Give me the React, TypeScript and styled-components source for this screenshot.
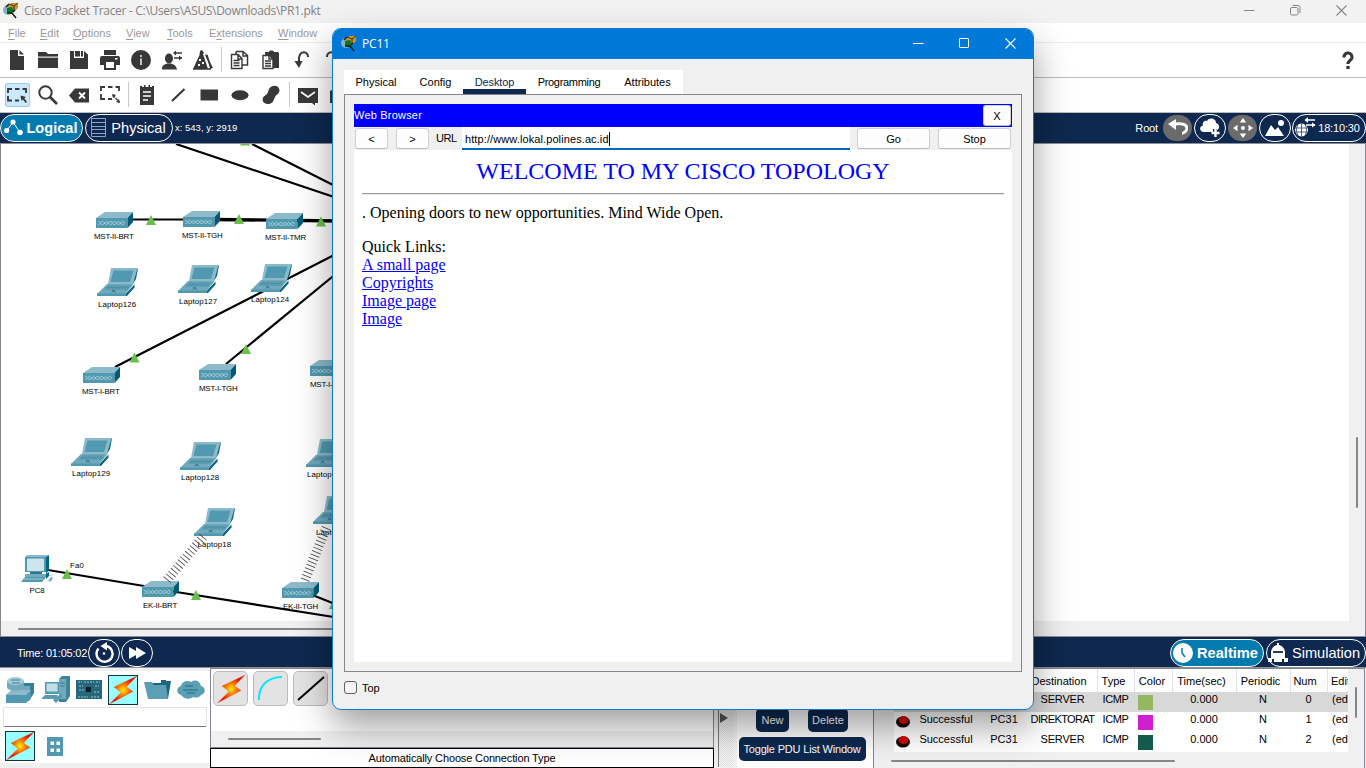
import React from "react";
import styled, { createGlobalStyle, css } from "styled-components";

const NAVY = "#0e284f";
const INK = "#383838";
const ui = '"Liberation Sans", Arial, sans-serif';
const segoe = '"Open Sans", "Noto Sans", sans-serif';

const Global = createGlobalStyle`
  * { box-sizing: border-box; }
  html, body { margin: 0; padding: 0; }
  body { width: 1366px; height: 768px; overflow: hidden; font-family: ${ui}; font-size: 11px; color: #000; background: #f0f0f0; }
  svg { display: block; flex: none; overflow: visible; }
`;

const Screen = styled.div`
  position: relative;
  display: flex;
  flex-direction: column;
  width: 1366px;
  height: 768px;
  overflow: hidden;
  background: #f0f0f0;
`;

const Txt = styled.span<{ $ls?: number }>`
  white-space: nowrap;
  letter-spacing: ${(p) => p.$ls ?? 0}px;
`;

/* ---------- main window chrome ---------- */
const TitleBar = styled.header`
  display: flex;
  align-items: center;
  height: 23px;
  padding: 0 0 2px 3px;
  background: #f2f2f2;
  color: #838383;
  font: 12px ${segoe};
`;
const TitleText = styled(Txt)`
  margin-left: 5px;
  flex: 1;
`;
const CaptionButtons = styled.div<{ $pad: number }>`
  display: flex;
  align-items: center;
  gap: 35px;
  margin-left: auto;
  padding-right: ${(p) => p.$pad}px;
`;
const MenuBar = styled.nav`
  display: flex;
  align-items: center;
  height: 20px;
  background: #fff;
  border-bottom: 1px solid #ededed;
  color: #999;
  font-size: 11px;
  padding: 2px 0 0 8px;
`;
const MenuItem = styled.span<{ $w: number }>`
  width: ${(p) => p.$w}px;
  white-space: nowrap;
  u { text-underline-offset: 2px; }
`;
const ToolBar = styled.div`
  display: flex;
  align-items: center;
  height: 35px;
  padding-left: 1.5px;
  background: #fff;
  border-bottom: 1px solid #bcbcbc;
  color: ${INK};
`;
const Tool = styled.div<{ $on?: boolean }>`
  display: flex;
  align-items: center;
  justify-content: center;
  width: 25px;
  height: 24px;
  margin: 0 3px;
  border-radius: 3px;
  svg { margin-left: -1px; }
  ${(p) => p.$on && css`background: #cce8ff; box-shadow: 0 0 0 1px #99cdf5 inset;`}
`;
const ToolSep = styled.div`
  width: 1px;
  height: 25px;
  margin: 0 2.5px;
  background: #c8c8c8;
`;
const Help = styled.div`
  margin-left: auto;
  width: 36px;
  display: flex;
  justify-content: center;
`;

const NavyBar = styled.div<{ $drop?: number }>`
  display: flex;
  align-items: center;
  height: 31px;
  padding-top: ${(p) => p.$drop ?? 0}px;
  background: ${NAVY};
  color: #fff;
  border-bottom: 1px solid #8c8f97;
`;
const Pill = styled.div<{ $w: number; $on?: boolean; $gray?: boolean; $gap?: number; $mr?: number; $pr?: number }>`
  display: flex;
  align-items: center;
  flex: none;
  justify-content: center;
  width: ${(p) => p.$w}px;
  height: 28px;
  margin-right: ${(p) => p.$mr ?? 1}px;
  padding-right: ${(p) => p.$pr ?? 0}px;
  border: 1px solid ${(p) => (p.$gray ? "transparent" : "#fff")};
  border-radius: 14px;
  background: ${(p) => (p.$on ? "#037bae" : p.$gray ? "#6b6b6b" : "transparent")};
  background-clip: padding-box;
  font-size: 14.6px;
  font-weight: ${(p) => (p.$on ? 700 : 400)};
  gap: ${(p) => p.$gap ?? 4}px;
`;
const Coords = styled(Txt)`
  margin-left: 1px;
  font-size: 9.5px;
`;
const Clock = styled(Txt)`
  font-size: 11px;
`;
const RootLabel = styled(Txt)`
  margin-right: 4px;
`;
const NavRight = styled.div`
  display: flex;
  align-items: center;
  margin-left: auto;
`;

/* ---------- workspace ---------- */
const Workspace = styled.main`
  display: grid;
  grid-template-columns: 1348px 1fr;
  grid-template-rows: 477px 1fr;
  height: 494px;
  border-left: 1px solid #83868f;
  border-right: 1px solid #83868f;
  border-bottom: 1px solid #8c8f97;
  background: #f0f0f0;
`;
const Canvas = styled.div`
  position: relative;
  overflow: hidden;
  background: #fff;
`;
const Links = styled.svg`
  position: absolute;
  inset: 0;
`;
const Node = styled.div<{ $x: number; $y: number }>`
  position: absolute;
  left: ${(p) => p.$x - 1}px;
  top: ${(p) => p.$y - 144}px;
`;
const NodeLabel = styled.span<{ $x: number; $y: number; $ls: number }>`
  position: absolute;
  left: ${(p) => p.$x - 1}px;
  top: ${(p) => p.$y - 148}px;
  font-size: 7.9px;
  line-height: 10px;
  letter-spacing: ${(p) => p.$ls}px;
  white-space: nowrap;
`;
const VTrack = styled.div`
  display: flex;
  justify-content: center;
  padding-top: 293px;
`;
const HTrack = styled.div`
  display: flex;
  align-items: center;
  padding: 1px 0 0 17px;
`;
const Thumb = styled.div<{ $w: number; $h: number }>`
  flex: none;
  width: ${(p) => p.$w}px;
  height: ${(p) => p.$h}px;
  background: #868686;
  border-radius: 1px;
`;

const TimeLabel = styled(Txt)`
  margin-left: 17px;
  width: 71px;
  font-size: 11px;
`;

/* ---------- bottom panels ---------- */
const Bottom = styled.section`
  display: flex;
  height: 100px;
`;
const DevicePanel = styled.div`
  width: 210px;
  height: 92px;
  margin-top: 3px;
  padding-top: 3px;
  background: #fff;
`;
const DeviceRow = styled.div`
  display: grid;
  grid-template-columns: 39px 34px 32px 36px 32px 36px;
  justify-items: center;
  align-items: center;
  height: 31px;
`;
const SearchBox = styled.div`
  width: 204px;
  height: 20px;
  margin: 2px 0 3px 3px;
  border: 1px solid #e2e2e2;
  border-bottom: 1px solid #777;
  border-radius: 2px;
`;
const SubRow = styled.div`
  display: flex;
  align-items: center;
  gap: 12px;
  padding: 1px 0 0 5px;
`;
const Selected = styled.div`
  width: 30px;
  height: 30px;
  border: 1px solid #12323c;
  background: #99ffff;
`;
const CablePanel = styled.div`
  display: flex;
  flex-direction: column;
  width: 504px;
`;
const CableTop = styled.div`
  display: flex;
  flex-direction: column;
  height: 80px;
  border: 1px solid #83868f;
  background: #fff;
`;
const CableRow = styled.div`
  display: flex;
  gap: 5px;
  height: 62px;
  padding: 2px 0 0 2px;
`;
const CableTile = styled.div`
  display: flex;
  align-items: center;
  justify-content: center;
  width: 35px;
  height: 35px;
  border: 1px solid #bbb;
  border-radius: 5px;
  background: #e3e3e3;
`;
const CableScroll = styled(HTrack)`
  flex: 1;
  padding-top: 0;
  background: #f0f0f0;
`;
const CableName = styled.div`
  display: flex;
  align-items: center;
  justify-content: center;
  height: 20px;
  border: 1px solid #000;
  background: #fff;
`;
const Splitter = styled.div`
  display: flex;
  align-items: center;
  width: 15px;
  height: 99px;
  margin: 0 4px;
  border-left: 1px solid #777;
  background: repeating-conic-gradient(#e2e2e2 0 25%, #f4f4f4 0 50%) 0 0 / 2px 2px;
`;
const PduPanel = styled.div`
  display: flex;
  flex-direction: column;
  align-items: center;
  width: 137px;
  padding: 40px 6px 0 0;
  border-right: 1px solid #83868f;
  background: #fdfdfd;
`;
const PduRow = styled.div`
  display: flex;
  gap: 19px;
  margin-bottom: 5px;
`;
const NavyButton = styled.div<{ $w: number }>`
  display: flex;
  align-items: center;
  justify-content: center;
  width: ${(p) => p.$w}px;
  height: 24px;
  border-radius: 5px;
  background: ${NAVY};
  color: #fff;
`;
const PduList = styled.div`
  display: grid;
  grid-template-columns: 474px 1fr;
  grid-template-rows: 83px 1fr;
  flex: 1;
  border-right: 1px solid #83868f;
  border-top: 1px solid #83868f;
  margin-right: 1px;
`;
const Table = styled.div`
  overflow: hidden;
  background: #fff;
`;
const Row = styled.div<{ $head?: boolean; $on?: boolean }>`
  display: grid;
  grid-template-columns: 19px 19px 68px 48px 69px 37px 38px 64px 54px 37px 21px;
  grid-template-rows: ${(p) => (p.$head ? 23 : 14)}px;
  align-items: center;
  height: ${(p) => (p.$head ? 23 : 20)}px;
  background: linear-gradient(to right, #f0f0f0 20px, ${(p) => (p.$on ? "#d8d8d8" : "#fff")} 20px);
`;
const Cell = styled.span<{ $head?: boolean; $clip?: boolean; $pr?: number }>`
  display: flex;
  align-items: center;
  justify-content: ${(p) => (p.$clip ? "flex-start" : "center")};
  height: 100%;
  padding-left: ${(p) => (p.$clip ? (p.$head ? 3 : 5) : 0)}px;
  padding-right: ${(p) => p.$pr ?? 0}px;
  overflow: hidden;
  white-space: nowrap;
  ${(p) => p.$head && css`border-left: 1px solid #e3e3e3;`}
`;
const Swatch = styled.i<{ $c: string }>`
  align-self: start;
  width: 15px;
  height: 15px;
  margin: 3px 0 0 4px;
  background: ${(p) => p.$c};
`;
const Ball = styled.svg`
  align-self: start;
  margin: 2px 0 0 2px;
`;
const ListV = styled.div`
  display: flex;
  justify-content: center;
  padding: 18px 0 0 0;
`;

/* ---------- PC11 window ---------- */
const Dialog = styled.section`
  position: absolute;
  left: 332px;
  top: 28px;
  display: flex;
  flex-direction: column;
  width: 702px;
  height: 682px;
  border: 1px solid #0f78d0;
  border-radius: 9px;
  background: #f0f0f0;
  overflow: hidden;
`;
const DialogShadow = styled.div`
  position: absolute;
  left: 332px;
  top: 28px;
  width: 702px;
  height: 682px;
  border-radius: 9px;
  box-shadow: 0 16px 36px rgba(0, 0, 0, 0.38);
`;
const DialogTitle = styled.div`
  display: flex;
  align-items: center;
  height: 30px;
  padding: 0 0 2px 8px;
  background: #0078d7;
  color: #fff;
  font: 12px ${segoe};
`;
const Tabs = styled.div`
  display: flex;
  width: 339px;
  height: 24px;
  margin: 11px 0 0 11px;
  background: #fff;
`;
const Tab = styled.div<{ $w: number; $on?: boolean; $ls?: number }>`
  display: flex;
  align-items: center;
  justify-content: center;
  width: ${(p) => p.$w}px;
  border-bottom: 5px solid ${(p) => (p.$on ? NAVY : "transparent")};
  padding-top: 5px;
  letter-spacing: ${(p) => p.$ls ?? 0}px;
  color: ${(p) => (p.$on ? NAVY : "#000")};
`;
const TabPanel = styled.div`
  display: flex;
  flex-direction: column;
  width: 678px;
  height: 578px;
  margin-left: 11px;
  padding: 9px;
  border: 1px solid #83868f;
`;
const BrowserHead = styled.div`
  display: flex;
  align-items: center;
  justify-content: space-between;
  height: 23px;
  padding-right: 1px;
  background: #0000fe;
  color: #fff;
`;
const BrowserName = styled(Txt)`
  padding-bottom: 2px;
`;
const Button = styled.div<{ $w: number; $mr?: number }>`
  display: flex;
  flex: none;
  align-items: center;
  justify-content: center;
  width: ${(p) => p.$w}px;
  height: 21px;
  margin-right: ${(p) => p.$mr ?? 0}px;
  border: 1px solid #d0d0d0;
  border-bottom-color: #bbb;
  border-radius: 3px;
  background: #fdfdfd;
  color: #000;
`;
const UrlRow = styled.div`
  display: flex;
  align-items: center;
  height: 23px;
  padding-left: 1px;
`;
const UrlLabel = styled(Txt)`
  flex: none;
  width: 26px;
  padding-bottom: 1px;
`;
const UrlInput = styled.div`
  display: flex;
  flex: none;
  align-items: center;
  width: 388px;
  height: 23px;
  margin-right: 7px;
  padding: 3px 0 0 3px;
  border-bottom: 2px solid #0067c0;
  background: #fff;
`;
const Caret = styled.i`
  width: 1px;
  height: 14px;
  background: #000;
`;
const WebPage = styled.article`
  flex: 1;
  padding: 8px 8px 0;
  background: #fff;
  font: 16px/18px "Liberation Serif", "Times New Roman", serif;
`;
const PageTitle = styled.div`
  color: #0000ff;
  font-size: 24px;
  line-height: 27px;
  text-align: center;
`;
const Rule = styled.div`
  height: 2px;
  margin: 8px 0 9px;
  border-top: 1px solid #9a9a9a;
  border-bottom: 1px solid #e6e6e6;
`;
const PageLine = styled.div<{ $gap?: number }>`
  height: 18px;
  margin-bottom: ${(p) => p.$gap ?? 0}px;
`;
const PageLink = styled(PageLine)`
  color: #0000ee;
  text-decoration: underline;
`;
const TopRow = styled.label`
  display: flex;
  align-items: center;
  gap: 5px;
  margin: 9px 0 0 11px;
`;
const Check = styled.i`
  width: 13px;
  height: 13px;
  border: 1px solid #5f5f5f;
  border-radius: 3px;
  background: #f6f6f6;
`;

/* ---------- drawings ---------- */
const Logo = () => (
  <svg width="16" height="16" viewBox="0 0 16 16">
    <ellipse cx="5" cy="8" rx="5" ry="5" fill="#86b4bd" />
    <path d="M5 4.500L8 1h7v5l-4 4-6-1z" fill="#c9952a" />
    <path d="M6 2l5 2 4-3M11 4v5" stroke="#4c3209" fill="none" />
    <path d="M4 6l5-1 2 4-3 3-4-2z" fill="#08742e" />
    <path d="M3 5l3-3M4 11h5l4 5M10 10l2-2" stroke="#141b14" strokeWidth="1.400" fill="none" />
  </svg>
);

const Caption = ({ color, restore }: { color: string; restore?: boolean }) => (
  <>
    <svg width="11" height="11" viewBox="0 0 11 11"><path d="M0 5.500h10.500" stroke={color} /></svg>
    <svg width="11" height="11" viewBox="0 0 11 11" fill="none" stroke={color}>
      {restore ? (
        <><rect x=".5" y="2.500" width="7.500" height="7.500" rx="1.500" /><path d="M2.500.5H8a2 2 0 0 1 2 2V8" /></>
      ) : (
        <rect x=".5" y=".5" width="9" height="9" rx=".6" />
      )}
    </svg>
    <svg width="11" height="11" viewBox="0 0 11 11"><path d="M.5.5l10 10M10.500.5l-10 10" stroke={color} strokeWidth="1.100" /></svg>
  </>
);

const I = ({ children, w = 20, h = 20 }: { children: React.ReactNode; w?: number; h?: number }) => (
  <svg width={w} height={h} viewBox={`0 0 ${w} ${h}`} fill="currentColor">{children}</svg>
);

const tools1: (React.ReactNode | null)[] = [
  <I><path d="M3 0h8v6h6v14H3zM12.500 0L17 4.500h-4.500z" /></I>,
  <I><path d="M0 2h8l2 2h10v2.500H0zM0 8h20v10H0z" /><path d="M0 6.500h20V8H0z" fillOpacity=".35" /></I>,
  <I><path d="M1 1h4v7h10V1l4 3.500V19H1zM6 1h5v5.500H6zM12 1h2v5.500h-2z" /></I>,
  <I><path fillRule="evenodd" d="M4 0h12v5H4zM2 6h16a2 2 0 0 1 2 2v7h-4v5H4v-5H0V8a2 2 0 0 1 2-2zM6 12v6h8v-6zM15 8v1.500h2.500V8z" /></I>,
  <I><circle cx="10" cy="10" r="10" /><path d="M9 8.500h2V15H9zM9 5h2v2H9z" fill="#c6c6c6" /></I>,
  <I><ellipse cx="7" cy="8.500" rx="4" ry="5" /><path d="M0 19.500c0-5 3-5 5-6h4c2 1 5 1 6 6z" /><path d="M12 3h8M12 8h8" stroke="currentColor" strokeWidth="1.500" /><path d="M11 3l3-2.500v5zM20 8l-3-2.500v5z" /></I>,
  <I><path d="M7 1l2-1 2 3-1 1 5 15H0L6.500 5zM13 4l7 14h-2L12 5z" /><path d="M0 19h18M14 5l4 14" stroke="currentColor" strokeWidth="1.500" /><path d="M6 9h2v2H6zM9 12h2v2H9zM5 14h2v2H5z" fill="#fff" /></I>,
  null,
  <I><path d="M6 1.500h7l4.500 4V15H12M6 4V1.500M13 1.500V6h4" stroke="currentColor" strokeWidth="1.500" fill="none" /><path d="M1.500 4.500H8l4 4v10H1.500zM8 4.500V9h4M3.500 10.500h6M3.500 13h6M3.500 15.500h6" stroke="currentColor" strokeWidth="1.400" fill="none" /></I>,
  <I><path d="M4 2h4c0-2 5-2 5 0h4l1 1v15H5z" /><path d="M2 5.500h6.500l3.500 3.500v9.500H2z" fill="#fff" stroke="currentColor" strokeWidth="1.400" /><path d="M8 5.500V9h4M4 11h6M4 13.500h6M4 16h6" stroke="currentColor" strokeWidth="1.400" fill="none" /></I>,
  <I><path d="M16 7c0-6-8-7-9 1v6" fill="none" stroke="currentColor" strokeWidth="2" /><path d="M2.500 11h8L7 18z" /></I>,
  <I><path d="M4 7c0-6 8-7 9 1v6" fill="none" stroke="currentColor" strokeWidth="2" /></I>,
];

const tools2: (React.ReactNode | null)[] = [
  <I><path d="M5 4H1v4M8 4h4.500M15.500 4H19v4M1 11v4.500h4M8 15.500h4" fill="none" stroke="currentColor" strokeWidth="1.800" /><path d="M13.500 10.500l5.500 1.500-1.700 1.300L20 17l-1.200 1-3-3.600-1.300 1.600z" /></I>,
  <I><circle cx="7.500" cy="7.500" r="6.200" fill="none" stroke="currentColor" strokeWidth="2" /><path d="M12 12l7 7" stroke="currentColor" strokeWidth="2.600" /></I>,
  <I><path d="M0 10.500l6-7h14v14H6z" /><path d="M10 7.500l6 6M16 7.500l-6 6" stroke="#fff" strokeWidth="1.800" /></I>,
  <I><path d="M5 2H1v4M8 2h4.500M15.500 2H19v4M1 9v5h4M8 14h4" fill="none" stroke="currentColor" strokeWidth="1.800" /><path d="M13 10l6.500 7.500" stroke="currentColor" strokeWidth="1.300" strokeDasharray="3 1" /><path d="M12 9l4 1-3 3zM20 18l-4-1 3-3z" /></I>,
  null,
  <I><path d="M3 1h2v1h2V0h1.500v2h3V0H13v2h2V1h2v19H3z" /><path d="M6 7h8M6 11h8M6 15h5" stroke="#fff" strokeWidth="1.500" /></I>,
  <I><path d="M4 16L16.500 4" stroke="currentColor" strokeWidth="2.200" /></I>,
  <I><rect x="1.500" y="4.500" width="17.500" height="11" /></I>,
  <I><ellipse cx="10" cy="10.200" rx="8.500" ry="5" /></I>,
  <I><path d="M8 4c3-5 10-4 10.500 1 0 4-3 4-4.500 7-2 5-3 7-7 7-6 0-7-6-3-8.500C7 9 7 7 8 4z" /></I>,
  null,
  <I><path d="M0 3h20v15h-3v2.500L14 18H0z" /><path d="M3 7l7 5 7-5" stroke="#fff" strokeWidth="1.700" fill="none" /></I>,
  <I><path d="M1 6l5-3h14v15H1z" /></I>,
];

const RouterArt = () => (
  <svg width="37" height="16" viewBox="0 0 37 16">
    <path d="M0 6L9 0h28l-5.500 6z" fill="#8dbaca" />
    <path d="M0 6h31.500v10H0z" fill="#5199b1" />
    <path d="M31.500 6L37 0v10l-5.500 6z" fill="#045a75" />
    <path d="M2.500 9l4 4 4-4 4 4 4-4 4 4 4-4 2 2M2.500 13l4-4 4 4 4-4 4 4 4-4 4 4 2-2" fill="none" stroke="#d6e8ed" strokeDasharray="1.500 .6" strokeWidth=".9" />
  </svg>
);
const LaptopArt = () => (
  <svg width="41" height="28" viewBox="0 0 41 28">
    <path d="M41 .5L39 11l-5 8-2-2L38 1z" fill="#056580" />
    <path d="M14 0h26.500L36 16H11z" fill="#8dbaca" />
    <path d="M16.500 2.500h20l-3.500 11.500H13.500z" fill="#5199b1" />
    <path d="M10 16h26.500L28.500 26H0z" fill="#72a9bc" />
    <path d="M11.500 17.500h22l-3 4H7z" fill="#4a90a8" />
    <path d="M9 18.500h23M7.500 20.500h23" stroke="#77adbf" strokeWidth=".6" strokeDasharray="2 1" />
    <path d="M0 25.500h29V28H0z" fill="#5199b1" />
    <path d="M29 25.500l8.500-9v3L30 28h-1z" fill="#056580" />
    <path d="M15 22l4 2.500M18 22l-3.500 2.500" stroke="#2a718a" strokeWidth=".8" />
  </svg>
);
const PcArt = () => (
  <svg width="33" height="28" viewBox="0 0 33 28">
    <path d="M4 2l2-2h22l-3 2z" fill="#8dbaca" />
    <path d="M25 2l3-2v15l-3 4z" fill="#056580" />
    <path d="M4 2h21v15H4z" fill="#5199b1" />
    <rect x="6" y="3.500" width="17" height="12.500" rx="1" fill="#cfe3ea" />
    <path d="M9 17h12v2H9z" fill="#2d7690" /><path d="M4 19h21v3H4z" fill="#72a9bc" />
    <path d="M25 19l3-2v4l-3 3z" fill="#056580" />
    <path d="M4 22h21l-4 5H0z" fill="#5199b1" /><path d="M3 24h19" stroke="#a7cbd6" />
    <path d="M27 26l3-4 2 .5-2 4z" fill="#75abbd" /><path d="M28 21l4-1.500" stroke="#a7cbd6" />
  </svg>
);

const BoltArt = ({ id }: { id: string }) => (
  <svg width="28" height="28" viewBox="0 0 28 28">
    <defs>
      <radialGradient id={id} gradientUnits="userSpaceOnUse" cx="14" cy="14" r="14">
        <stop offset="0" stopColor="#ffee00" /><stop offset=".4" stopColor="#ff7a00" /><stop offset=".9" stopColor="#ee0808" />
      </radialGradient>
    </defs>
    <path d="M28 0L5 11l7 5.500L.500 28 24 15.500 17.500 11z" fill={`url(#${id})`} stroke="#d45a20" strokeWidth=".3" />
  </svg>
);

const Globe = () => (
  <svg width="22" height="22" viewBox="0 0 22 22" fill="none" stroke="#fff">
    <circle cx="7.500" cy="13" r="6.500" fill="#fff" stroke="none" />
    <path d="M1 11h13M1 15h13M7.500 6.500v13M4 7.500c-2 4-2 7 0 11M11 7.500c2 4 2 7 0 11" stroke={NAVY} strokeWidth=".7" />
    <path d="M12 3h9M12 8h9" strokeWidth="1.600" /><path d="M14 0v6l-3.500-3zM18 5.500v5l3.500-2.500z" fill="#fff" stroke="none" />
  </svg>
);

const routers: [number, number, string, number, number][] = [
  [96, 212, "MST-II-BRT", 94, 236], [183, 211, "MST-II-TGH", 182, 235], [266, 213, "MST-II-TMR", 265, 237],
  [83, 367, "MST-I-BRT", 82, 391], [199, 364, "MST-I-TGH", 199, 388], [310, 360, "MST-I-TMR", 310, 384],
  [141.5, 581, "EK-II-BRT", 143, 605], [282, 582, "EK-II-TGH", 283, 606],
];
const laptops: [number, number, string, number, number][] = [
  [97, 268, "Laptop126", 98, 304], [178, 265, "Laptop127", 179, 301], [250.5, 264, "Laptop124", 251, 299],
  [71, 438, "Laptop129", 72, 473], [180, 442, "Laptop128", 181, 477], [306, 439, "Laptop130", 307, 474],
  [194, 508, "Laptop18", 197.5, 544], [313, 496, "Laptop19", 316, 532],
];
const arrows = [[151, 220], [239, 219], [321, 221.5], [134.5, 357.5], [246, 349], [245, 140.500], [67, 574], [196, 595], [334, 604]];

const Topology = () => (
  <Canvas>
    <Links width="1348" height="477" viewBox="1 144 1348 477">
      <g stroke="#000" strokeWidth="2.200" fill="none">
        <path d="M176 144L340 199M252 144L340 188.500M115 367L340 252M226 364L340 270.500M48 570L150 587M170 591L340 618" />
        <path d="M130 219.500h60" /><path d="M215 219.500L340 221" strokeWidth="3.300" /><path d="M310 594L340 606" />
      </g>
      <g fill="#6abf4b">
        {arrows.map(([x, y], i) => <path key={i} d={`M${x} ${y - 5}l5 10h-10z`} />)}
      </g>
    </Links>
    {routers.map(([x, y, n, lx, ly]) => (
      <React.Fragment key={n}>
        <Node $x={x} $y={y}><RouterArt /></Node>
        <NodeLabel $x={lx} $y={ly} $ls={-0.2}>{n}</NodeLabel>
      </React.Fragment>
    ))}
    {laptops.map(([x, y, n, lx, ly]) => (
      <React.Fragment key={n}>
        <Node $x={x} $y={y}><LaptopArt /></Node>
        <NodeLabel $x={lx} $y={ly} $ls={0.1}>{n}</NodeLabel>
      </React.Fragment>
    ))}
    <Node $x={21} $y={555}><PcArt /></Node>
    <NodeLabel $x={29.5} $y={590} $ls={-0.1}>PC8</NodeLabel>
    <NodeLabel $x={70} $y={565} $ls={0.1}>Fa0</NodeLabel>
    <Links width="1348" height="477" viewBox="1 144 1348 477">
      <g stroke="#444" strokeWidth="9.500" strokeDasharray=".8 2.900">
        <path d="M167 580L204 536M305 580L327 526" />
      </g>
    </Links>
  </Canvas>
);

const menus: [string, number][] = [
  ["File", 32], ["Edit", 33], ["Options", 53], ["View", 41], ["Tools", 42], ["Extensions", 69], ["Window", 50],
];
const columns: [string, number][] = [
  ["", 0], ["", 0], ["Last Status", 4], ["Source", 4], ["Destination", 8], ["Type", 5], ["Color", 3], ["Time(sec)", 6], ["Periodic", 6], ["Num", 8],
];
const pdus: string[][] = [
  ["Successful", "PC31", "SERVER", "#93b85f", "0"],
  ["Successful", "PC31", "DIREKTORAT", "#d11ed1", "1"],
  ["Successful", "PC31", "SERVER", "#145a4c", "2"],
];

export default function App() {
  return (
    <Screen>
      <Global />
      <TitleBar>
        <Logo />
        <TitleText $ls={-0.31}>Cisco Packet Tracer - C:\Users\ASUS\Downloads\PR1.pkt</TitleText>
        <CaptionButtons $pad={19}><Caption color="#858585" restore /></CaptionButtons>
      </TitleBar>
      <MenuBar>
        {menus.map(([m, w]) => (
          <MenuItem key={m} $w={w}>
            {m === "Extensions" ? <>E<u>x</u>tensions</> : <><u>{m[0]}</u>{m.slice(1)}</>}
          </MenuItem>
        ))}
      </MenuBar>
      <ToolBar>
        {tools1.map((t, i) => (t ? <Tool key={i}>{t}</Tool> : <ToolSep key={i} />))}
        <Help>
          <I w={12} h={18}><path d="M2 6.500c0-6.500 8.500-5.500 8 0-.5 3-4 3-4 6.500" fill="none" stroke="currentColor" strokeWidth="3.200" /><path d="M4.300 15h3.400v3H4.300z" /></I>
        </Help>
      </ToolBar>
      <ToolBar>
        {tools2.map((t, i) => (t ? <Tool key={i} $on={i === 0}>{t}</Tool> : <ToolSep key={i} />))}
      </ToolBar>
      <NavyBar>
        <Pill $w={83} $on $mr={2} $gap={3} $pr={1}>
          <I w={19} h={19}><path d="M3 12.500l6-8.500 7 10.500" fill="none" stroke="#fff" /><circle cx="9" cy="4" r="2.600" /><circle cx="2.600" cy="12.500" r="2.600" /><circle cx="16" cy="14.500" r="2.800" /></I>
          <Txt>Logical</Txt>
        </Pill>
        <Pill $w={88} $gap={5} $pr={1}>
          <svg width="15" height="19" viewBox="0 0 15 19" fill="none" stroke="#8fa3c2"><path d="M.5.5h14v18H.5zM.5 4.500h14M.5 8.500h14M.5 11.500h14M.5 15.500h14" /></svg>
          <Txt>Physical</Txt>
        </Pill>
        <Coords>x: 543, y: 2919</Coords>
        <NavRight>
          <RootLabel $ls={-0.15}>Root</RootLabel>
          <Pill $w={31} $gray><I><path d="M0 6l8-5v3.500c9-1 13 2 12 6.500 0 3-3 5-6 6v-3c3-1 4-3 3-5-1-1.500-4-2-9-1.500V12z" /></I></Pill>
          <Pill $w={32}><I><path d="M4 14c-5 0-5-6-1-6.500C2 4 5 2 7 3c2-4 9-3 9 2 4 1 4 6 1 7V11h-4v3z" /><path d="M15.500 11v8M11.500 15h8" stroke="#fff" strokeWidth="2.400" /></I></Pill>
          <Pill $w={31} $gray><I><path d="M10 0l3.200 4.500H6.800zM10 20l3.200-4.500H6.800zM0 10l4.500-3.200v6.400zM20 10l-4.500-3.200v6.400z" /><circle cx="10" cy="10" r="2" /></I></Pill>
          <Pill $w={32}><I><path d="M0 18L6 7l4 5 3-3 6 9z" /><circle cx="16" cy="5" r="3" /></I></Pill>
          <Pill $w={74} $gap={2} $mr={0} $pr={4}><Globe /><Clock $ls={-0.15}>18:10:30</Clock></Pill>
        </NavRight>
      </NavyBar>
      <Workspace>
        <Topology />
        <VTrack><Thumb $w={2} $h={71} /></VTrack>
        <HTrack><Thumb $w={800} $h={2} /></HTrack>
      </Workspace>
      <NavyBar $drop={2}>
        <TimeLabel $ls={-0.2}>Time: 01:05:02</TimeLabel>
        <Pill $w={32}><I><path d="M12.500 3a8 8 0 1 1-8 2.500" fill="none" stroke="#fff" strokeWidth="2.400" /><path d="M13-1v8.500L6.500 3z" /><circle cx="10" cy="10.500" r="1.300" /></I></Pill>
        <Pill $w={32}><I w={17} h={14}><path d="M0 1l7 4V1l10 6-10 6V9l-7 4z" /></I></Pill>
        <NavRight>
          <Pill $w={94} $on $mr={2} $pr={3}>
            <I><circle cx="10" cy="10" r="10" /><path d="M9 5v5l3 4" fill="none" stroke="#037bae" strokeWidth="1.500" /></I>
            <Txt>Realtime</Txt>
          </Pill>
          <Pill $w={100} $mr={0} $pr={4}>
            <I><path d="M9 0h2v2c4 1 6 4 6 8v5h3v4h-4v-3h-2v3H6v-3H4v3H0v-4h3v-5c0-4 2-7 6-8z" /><path d="M5 9h10" stroke={NAVY} strokeWidth="1.800" /></I>
            <Txt>Simulation</Txt>
          </Pill>
        </NavRight>
      </NavyBar>
      <Bottom>
        <DevicePanel>
          <DeviceRow>
            <svg width="28" height="26" viewBox="0 0 28 26"><path d="M11 9l5-3h12v10l-5 8H11z" fill="#347f98" /><path d="M11 9h13v10H11z" fill="#72a9bc" /><path d="M0 18l6-5h19v8l-5 5H0z" fill="#5199b1" /><path d="M0 18l6-5h19l-5 5z" fill="#8dbaca" /><path d="M1 4v6c0 5 17 5 17 0V4z" fill="#72a9bc" /><ellipse cx="9.500" cy="4" rx="8.500" ry="4" fill="#a7cbd6" /><path d="M5 3h9M6 6h8" stroke="#347f98" /></svg>
            <svg width="28" height="27" viewBox="0 0 28 27"><path d="M17 3l3-3h8v20l-4 6h-7z" fill="#3c839b" /><path d="M17 3h7v20h-7z" fill="#72a9bc" /><path d="M18 7h5M18 10h5" stroke="#347f98" /><path d="M3 6h14v12H3z" fill="#5199b1" /><path d="M4.500 7.500h11v8h-11z" fill="#c5dde5" /><path d="M0 22l3-3h13l-2 4H0zM11 24l9-7v4l-6 6z" fill="#549bb3" /></svg>
            <svg width="26" height="19" viewBox="0 0 26 19"><rect width="26" height="19" fill="#27677c" /><path d="M2 2h4M8 2h10M20 2h4M2 17h10M15 17h9M3 6h4M3 10h5M19 6h4M18 12h5" stroke="#9fc6d2" strokeWidth="1.200" strokeDasharray="2 1" /><rect x="10" y="7" width="5" height="5" fill="#0c1d24" /></svg>
            <Selected><BoltArt id="boltA" /></Selected>
            <svg width="27" height="19" viewBox="0 0 27 19"><path d="M4 3h13V0h5v1h5l-3 18H4z" fill="#1c667f" /><path d="M0 2h8l2 3h12l2 14H4z" fill="#5c9fb5" /></svg>
            <svg width="28" height="19" viewBox="0 0 28 19"><path d="M4 15C-1 14-1 7 4 6 5 1 11 0 14 2c4-3 9-1 10 4 5 1 5 8 0 9-2 3-6 3-8 2-4 3-9 2-12-2z" fill="#5c9fb5" /><path d="M8 6h8M6 10h15M10 13h8" stroke="#327b93" strokeWidth="1.400" /></svg>
          </DeviceRow>
          <SearchBox />
          <SubRow>
            <Selected><BoltArt id="boltB" /></Selected>
            <svg width="16" height="19" viewBox="0 0 16 19"><rect width="16" height="19" fill="#5199b1" /><path d="M3.500 4.500h3.500v3.500H3.500zM9.500 4.500h3.500v3.500H9.500zM3.500 11.500h3.500v3.500H3.500zM9.500 11.500h3.500v3.500H9.500z" fill="#fff" /></svg>
          </SubRow>
        </DevicePanel>
        <CablePanel>
          <CableTop>
            <CableRow>
              <CableTile><BoltArt id="boltC" /></CableTile>
              <CableTile><svg width="25" height="25" viewBox="0 0 25 25"><path d="M1 24C0 10 10 1 24 1" fill="none" stroke="#00e8ff" strokeWidth="2" /></svg></CableTile>
              <CableTile><svg width="28" height="25" viewBox="0 0 28 25"><path d="M1 24L27 1" stroke="#000" strokeWidth="2" /></svg></CableTile>
            </CableRow>
            <CableScroll><Thumb $w={93} $h={2} /></CableScroll>
          </CableTop>
          <CableName><Txt $ls={-0.14}>Automatically Choose Connection Type</Txt></CableName>
        </CablePanel>
        <Splitter><svg width="9" height="10" viewBox="0 0 9 10"><path d="M1 0l8 5-8 5z" fill="#555" /></svg></Splitter>
        <PduPanel>
          <PduRow><NavyButton $w={33}>New</NavyButton><NavyButton $w={40}>Delete</NavyButton></PduRow>
          <NavyButton $w={127}><Txt $ls={-0.18}>Toggle PDU List Window</Txt></NavyButton>
        </PduPanel>
        <PduList>
          <Table>
            <Row $head>
              {columns.map(([h, pr], i) => (
                <Cell key={i} $head $pr={pr}>{h}</Cell>
              ))}
              <Cell $head $clip>Edit</Cell>
            </Row>
            {pdus.map(([st, src, dst, c, n], i) => (
              <Row key={n} $on={i === 0}>
                <span />
                <Ball width="16" height="14" viewBox="0 0 16 14"><ellipse cx="8" cy="8" rx="7" ry="5.500" fill="#160606" /><ellipse cx="8.500" cy="6" rx="5" ry="4" fill="#d40808" /></Ball>
                <Cell>{st}</Cell><Cell>{src}</Cell><Cell><Txt $ls={dst.length > 6 ? -0.6 : -0.2}>{dst}</Txt></Cell><Cell><Txt $ls={-0.4}>ICMP</Txt></Cell>
                <Swatch $c={c} />
                <Cell>0.000</Cell><Cell>N</Cell><Cell>{n}</Cell><Cell $clip>(edit)</Cell>
              </Row>
            ))}
          </Table>
          <ListV><Thumb $w={2} $h={31} /></ListV>
          <HTrack><Thumb $w={284} $h={2} /></HTrack>
        </PduList>
      </Bottom>

      <DialogShadow />
      <Dialog>
        <DialogTitle>
          <Logo />
          <TitleText $ls={-0.2}>PC11</TitleText>
          <CaptionButtons $pad={17}><Caption color="#fff" /></CaptionButtons>
        </DialogTitle>
        <Tabs>
          <Tab $w={64}>Physical</Tab><Tab $w={55}>Config</Tab><Tab $w={63} $on $ls={-0.1}>Desktop</Tab>
          <Tab $w={86} $ls={-0.3}>Programming</Tab><Tab $w={71}>Attributes</Tab>
        </Tabs>
        <TabPanel>
          <BrowserHead><BrowserName $ls={0.2}>Web Browser</BrowserName><Button $w={28}>X</Button></BrowserHead>
          <UrlRow>
            <Button $w={33} $mr={8}>&lt;</Button>
            <Button $w={33} $mr={7}>&gt;</Button>
            <UrlLabel $ls={-0.5}>URL</UrlLabel>
            <UrlInput><Txt $ls={0.1}>http://www.lokal.polines.ac.id</Txt><Caret /></UrlInput>
            <Button $w={73} $mr={8}>Go</Button>
            <Button $w={73}>Stop</Button>
          </UrlRow>
          <WebPage>
            <PageTitle>WELCOME TO MY CISCO TOPOLOGY</PageTitle>
            <Rule />
            <PageLine $gap={16}>. Opening doors to new opportunities. Mind Wide Open.</PageLine>
            <PageLine>Quick Links:</PageLine>
            <PageLink>A small page</PageLink>
            <PageLink>Copyrights</PageLink>
            <PageLink>Image page</PageLink>
            <PageLink>Image</PageLink>
          </WebPage>
        </TabPanel>
        <TopRow><Check />Top</TopRow>
      </Dialog>
    </Screen>
  );
}
